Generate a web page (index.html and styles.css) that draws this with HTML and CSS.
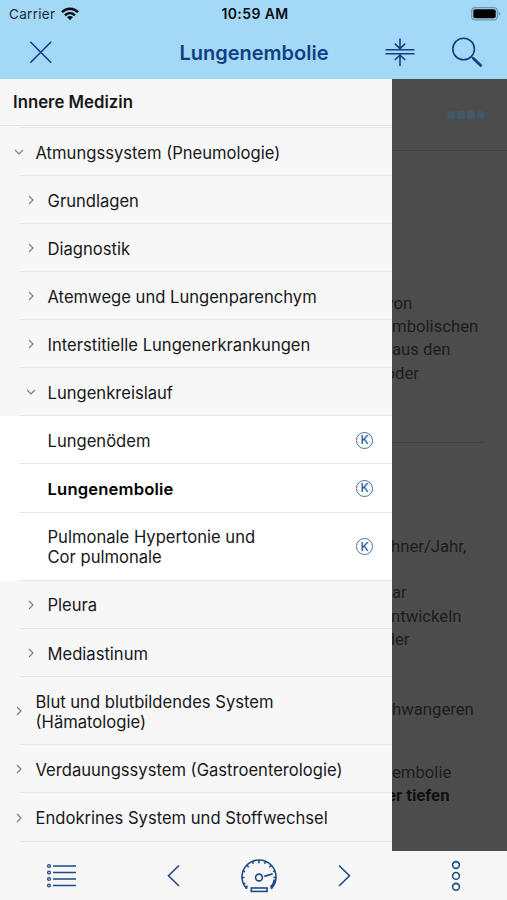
FILE: index.html
```html
<!DOCTYPE html>
<html lang="de">
<head>
<meta charset="utf-8">
<title>Lungenembolie</title>
<link rel="stylesheet" href="styles.css">
</head>
<body>
<header class="top">
  <div class="status">
    <div class="carrier"><span>Carrier</span>
      <svg width="18" height="14" viewBox="0 0 18 14"><g fill="none" stroke="#0b0d10" stroke-width="2.500"><path d="M1 5.200C5.500 .6 12.500 .6 17 5.200"/><path d="M4 8.300C6.900 5.500 11.100 5.500 14 8.300"/></g><path d="M6 10.100C7.700 8.600 10.300 8.600 12 10.100L9 13.300Z" fill="#0b0d10"/></svg>
    </div>
    <time class="clock">10:59 AM</time>
    <svg class="battery" width="30" height="14" viewBox="0 0 30 14"><rect x=".7" y=".7" width="25.600" height="12.200" rx="3.500" fill="none" stroke="#6d94ac" stroke-width="1.200"/><rect x="2.300" y="2.300" width="22.400" height="9" rx="2" fill="#000"/><path d="M27.700 4.800Q29.500 5.300 29.500 6.800T27.700 8.800Z" fill="#6d94ac"/></svg>
  </div>
  <nav class="bar">
    <svg class="close" width="24" height="24" viewBox="0 0 24 24"><path d="M1.300 .8L22.200 21.700M22.200 .8L1.300 21.700"/></svg>
    <h1>Lungenembolie</h1>
    <svg class="collapse" width="30" height="30" viewBox="0 0 30 30"><path d="M.5 11.800H29.500M.5 15.800H29.500M15 .5V10.600M9.800 5.600L15 10.600L20.200 5.600M15 28V17M9.800 22L15 17L20.200 22"/></svg>
    <svg class="search" width="32" height="32" viewBox="0 0 32 32"><circle cx="12.600" cy="12" r="10.800"/><path d="M20.500 19.700L22.600 21.800"/><path class="handle" d="M22 21.100L30.500 29.300"/></svg>
  </nav>
</header>
<main class="content">
  <aside class="drawer">
    <h2>Innere Medizin</h2>
    <ul class="tree">
      <li class="row"><svg class="chev" viewBox="0 0 10 10"><path d="M1 3L5 7L9 3"/></svg><span>Atmungssystem (Pneumologie)</span></li>
      <li class="row sub"><svg class="chev" viewBox="0 0 10 10"><path d="M3 1L7 5L3 9"/></svg><span>Grundlagen</span></li>
      <li class="row sub"><svg class="chev" viewBox="0 0 10 10"><path d="M3 1L7 5L3 9"/></svg><span>Diagnostik</span></li>
      <li class="row sub"><svg class="chev" viewBox="0 0 10 10"><path d="M3 1L7 5L3 9"/></svg><span>Atemwege und Lungenparenchym</span></li>
      <li class="row sub"><svg class="chev" viewBox="0 0 10 10"><path d="M3 1L7 5L3 9"/></svg><span>Interstitielle Lungenerkrankungen</span></li>
      <li class="row sub"><svg class="chev" viewBox="0 0 10 10"><path d="M1 3L5 7L9 3"/></svg><span>Lungenkreislauf</span></li>
      <li class="row leaf"><span>Lungenödem</span><b class="badge">K</b></li>
      <li class="row leaf current"><span>Lungenembolie</span><b class="badge">K</b></li>
      <li class="row leaf tall"><span>Pulmonale Hypertonie und<br>Cor pulmonale</span><b class="badge">K</b></li>
      <li class="row sub"><svg class="chev" viewBox="0 0 10 10"><path d="M3 1L7 5L3 9"/></svg><span>Pleura</span></li>
      <li class="row sub"><svg class="chev" viewBox="0 0 10 10"><path d="M3 1L7 5L3 9"/></svg><span>Mediastinum</span></li>
      <li class="row tall"><svg class="chev" viewBox="0 0 10 10"><path d="M3 1L7 5L3 9"/></svg><span>Blut und blutbildendes System<br>(Hämatologie)</span></li>
      <li class="row"><svg class="chev" viewBox="0 0 10 10"><path d="M3 1L7 5L3 9"/></svg><span>Verdauungssystem (Gastroenterologie)</span></li>
      <li class="row"><svg class="chev" viewBox="0 0 10 10"><path d="M3 1L7 5L3 9"/></svg><span>Endokrines System und Stoffwechsel</span></li>
    </ul>
  </aside>
  <article class="page">
    <div class="tabs"><i class="round"></i><i></i><i></i><i class="round"></i></div>
    <section class="definition">
      <p class="s-von">von</p>
      <p>mbolischen</p>
      <p>aus den</p>
      <p class="s-oder">oder</p>
    </section>
    <section class="facts">
      <p class="s-jahr">hner/Jahr,</p>
      <p class="gap-one">ar</p>
      <p class="s-ent">ntwickeln</p>
      <p class="s-der">der</p>
      <p class="gap-two">hwangeren</p>
      <p class="gap-three">embolie</p>
      <p class="strong">er tiefen</p>
    </section>
  </article>
</main>
<footer class="toolbar">
  <svg class="list" width="31" height="25" viewBox="0 0 31 25"><path d="M7 3H30M7 9.500H30M7 16H30M7 22.500H30"/><g class="dots"><circle cx="3" cy="3" r="1.400"/><circle cx="3" cy="9.500" r="1.400"/><circle cx="3" cy="16" r="1.400"/><circle cx="3" cy="22.500" r="1.400"/></g></svg>
  <svg class="prev" width="13" height="23" viewBox="0 0 13 23"><path d="M12 1.500L1.500 11.800L12 22"/></svg>
  <svg class="gauge" width="38" height="36" viewBox="0 0 38 36"><path d="M6.500 30.500A17 17 0 1 1 31.500 30.500"/><path d="M6.500 31L7 27.500M31.500 31L31 27.500M2 19.500H4.500M36 19.500H33.500M19 2.500V5.200M7 7.500L8.700 9.200M31 7.500L29.300 9.200M12.500 3.800L13.300 5.700M25.500 3.800L24.700 5.700M3.300 13L5 13.700M34.700 13L33 13.700M3.600 26L5.400 25.200"/><path class="limit" d="M34.600 21.500Q34.200 26 31.300 29"/><circle cx="19" cy="19.500" r="3.400"/><rect x="11.300" y="30" width="15.800" height="3.400"/><path class="needle" d="M24 17.400L32.500 14.900L33 16.500L24.600 19.300Z"/></svg>
  <svg class="next" width="13" height="23" viewBox="0 0 13 23"><path d="M1 1.500L11.500 11.800L1 22"/></svg>
  <svg class="more" width="10" height="32" viewBox="0 0 10 32"><circle cx="5" cy="5" r="3.400"/><circle cx="5" cy="15.900" r="3.400"/><circle cx="5" cy="26.800" r="3.400"/></svg>
</footer>
</body>
</html>
```
FILE: styles.css
```css
* { box-sizing: border-box; }
body { margin: 0; width: 507px; height: 900px; display: flex; flex-direction: column; overflow: hidden; background: #f8f7f8; font-family: Inter, "Liberation Sans", sans-serif; color: #17181a; }
h1, h2, p, ul { margin: 0; padding: 0; }
svg { display: block; flex: none; fill: none; stroke: #1d4a86; stroke-width: 1.6; }

.top { height: 79px; flex: none; background: #a4d8f7; }
.status { height: 27px; display: grid; grid-template-columns: 1fr auto 1fr; align-items: center; padding: 0 6px 0 9px; font-size: 13.5px; }
.carrier { display: flex; align-items: center; gap: 6px; color: #1d2b36; letter-spacing: .3px; }
.carrier svg, .battery { stroke: none; }
.clock { font-weight: 600; font-size: 14px; letter-spacing: .4px; color: #0b0d10; }
.battery { justify-self: end; }
.bar { height: 52px; display: grid; grid-template-columns: 150px 208px 60px 1fr; align-items: center; }
.bar svg { stroke: #123f82; }
.close { margin-left: 29px; }
.bar h1 { text-align: center; font-size: 20px; font-weight: 600; color: #123f82; }
.collapse { margin-left: 27px; }
.search { margin-left: 33px; }
.bar .search .handle { stroke-width: 2.8; }

.content { height: 772px; flex: none; display: grid; grid-template-columns: 392px 1fr; }
.drawer { background: #f8f7f8; overflow: hidden; }
.drawer h2 { height: 47px; padding: 0 13px; line-height: 46px; font-size: 16.8px; font-weight: 600; border-bottom: 1px solid #e6e6e8; }
.tree { list-style: none; margin-top: 1px; padding-top: 1px; background: linear-gradient(#e8e8ea, #e8e8ea) 20px 0 / 100% 1px no-repeat; }
.row { height: 48.07px; display: flex; align-items: center; padding: 0 19px 0 14px; font-size: 16.6px; line-height: 20.3px; background: linear-gradient(#e5e5e7, #e5e5e7) 20px 100% / 100% 1px no-repeat; }
.row span { white-space: nowrap; padding-top: 1.4px; }
.sub { padding-left: 26px; }
.leaf { padding-left: 47.5px; justify-content: space-between; background-color: #fff; }
.tall { height: 68.4px; }
.current { font-weight: 600; letter-spacing: .18px; color: #000; }
.chev { width: 10px; height: 10px; margin-right: 11.5px; stroke: #77787c; stroke-width: 1.1; }
.badge { width: 17px; height: 17px; border: 1.5px solid #4a73a8; border-radius: 50%; display: grid; place-items: center; font-size: 12px; line-height: 14px; font-weight: 500; letter-spacing: 0; color: #2c5b98; }

.page { background: #4c4c4c; overflow: hidden; font: 16.7px/23.2px Roboto, "Liberation Sans", sans-serif; color: #1c1c1c; }
.page p { white-space: nowrap; }
.tabs { height: 72px; display: flex; align-items: center; gap: 2px; padding-left: 55px; border-bottom: 1px solid #424242; }
.tabs i { width: 8px; height: 8px; background: #405a67; border-radius: 2px; }
.tabs .round { border-radius: 4px; }
.definition { height: 292px; margin-right: 23px; padding-top: 141px; border-bottom: 1px solid #424242; }
.facts { padding-top: 92px; }
.s-von, .s-oder { margin-left: -6.5px; }
.s-jahr, .s-ent { margin-left: -1px; }
.s-der { margin-left: -6.5px; }
.gap-one { margin-top: 23.2px; }
.gap-two { margin-top: 46.5px; }
.gap-three { margin-top: 40.5px; }
.strong { font-weight: 700; color: #111; margin-left: -5px; }

.toolbar { flex: 1; display: grid; grid-template-columns: 120px 107px 66px 115px 1fr; align-items: center; background: #f8f7f8; }
.list { margin-left: 46px; }
.list .dots { stroke-width: 1.3; }
.prev { margin-left: 47px; }
.gauge { margin-left: 13px; }
.next { margin-left: 45px; }
.more { margin-left: 43px; }
.gauge .limit { stroke-width: 2.4; }
.gauge .needle { fill: #1d4a86; stroke: none; }
```
